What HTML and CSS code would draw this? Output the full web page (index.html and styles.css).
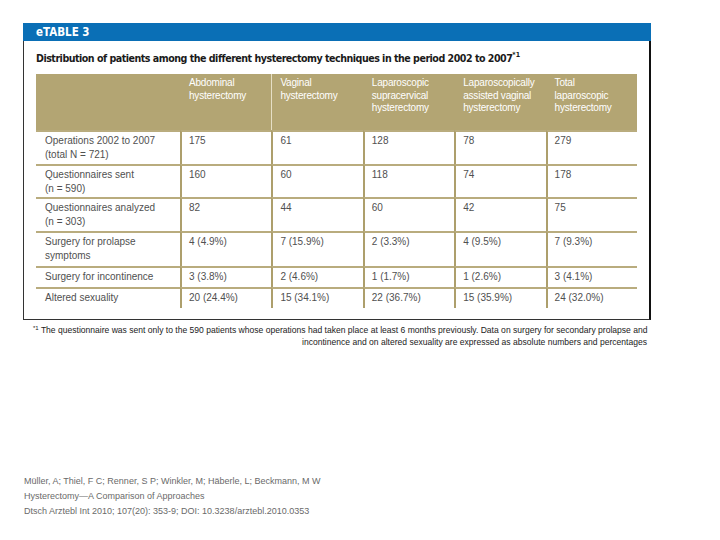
FILE: index.html
```html
<!DOCTYPE html>
<html lang="en">
<head>
<meta charset="utf-8">
<title>eTABLE 3</title>
<link rel="stylesheet" href="styles.css">
</head>
<body>
<div class="card">
  <div class="bar">eTABLE 3</div>
  <div class="frame">
    <div class="title">Distribution of patients among the different hysterectomy techniques in the period 2002 to 2007<sup>*1</sup></div>
    <div class="tbl">
      <div class="th"></div>
      <div class="th">Abdominal<br>hysterectomy</div>
      <div class="th sep">Vaginal<br>hysterectomy</div>
      <div class="th">Laparoscopic<br>supracervical<br>hysterectomy</div>
      <div class="th">Laparoscopically<br>assisted vaginal<br>hysterectomy</div>
      <div class="th">Total<br>laparoscopic<br>hysterectomy</div>

      <div class="td lbl">Operations 2002 to 2007<br>(total N = 721)</div>
      <div class="td">175</div>
      <div class="td">61</div>
      <div class="td">128</div>
      <div class="td">78</div>
      <div class="td">279</div>

      <div class="td lbl">Questionnaires sent<br>(n = 590)</div>
      <div class="td">160</div>
      <div class="td">60</div>
      <div class="td">118</div>
      <div class="td">74</div>
      <div class="td">178</div>

      <div class="td lbl">Questionnaires analyzed<br>(n = 303)</div>
      <div class="td">82</div>
      <div class="td">44</div>
      <div class="td">60</div>
      <div class="td">42</div>
      <div class="td">75</div>

      <div class="td lbl">Surgery for prolapse<br>symptoms</div>
      <div class="td">4 (4.9%)</div>
      <div class="td">7 (15.9%)</div>
      <div class="td">2 (3.3%)</div>
      <div class="td">4 (9.5%)</div>
      <div class="td">7 (9.3%)</div>

      <div class="td lbl">Surgery for incontinence</div>
      <div class="td">3 (3.8%)</div>
      <div class="td">2 (4.6%)</div>
      <div class="td">1 (1.7%)</div>
      <div class="td">1 (2.6%)</div>
      <div class="td">3 (4.1%)</div>

      <div class="td lbl">Altered sexuality</div>
      <div class="td">20 (24.4%)</div>
      <div class="td">15 (34.1%)</div>
      <div class="td">22 (36.7%)</div>
      <div class="td">15 (35.9%)</div>
      <div class="td">24 (32.0%)</div>
    </div>
  </div>
  <p class="note"><sup>*1</sup> The questionnaire was sent only to the 590 patients whose operations had taken place at least 6 months previously. Data on surgery for secondary prolapse and<br>incontinence and on altered sexuality are expressed as absolute numbers and percentages</p>
</div>
<div class="cite">
  <div>Müller, A; Thiel, F C; Renner, S P; Winkler, M; Häberle, L; Beckmann, M W</div>
  <div>Hysterectomy—A Comparison of Approaches</div>
  <div>Dtsch Arztebl Int 2010; 107(20): 353-9; DOI: 10.3238/arztebl.2010.0353</div>
</div>
</body>
</html>
```
FILE: styles.css
```css
* { box-sizing: border-box; }
html, body { margin: 0; padding: 0; background: #fff; }
body { font-family: "Liberation Sans", Arial, sans-serif; }

.card {
  margin: 23px 0 0 23px;
  width: 628px;
}

.bar {
  height: 18px;
  background: #0a6fb6;
  color: #fff;
  font-family: "DejaVu Sans Condensed", "Liberation Sans", Arial, sans-serif;
  font-weight: bold;
  font-size: 11.5px;
  line-height: 19px;
  padding-left: 13px;
}

.frame {
  border-left: 1px solid #333;
  border-right: 2px solid #111;
  border-bottom: 1px solid #333;
  padding: 10px 12px 11px 12px;
}

.title {
  font-family: "DejaVu Sans Condensed", "Liberation Sans", Arial, sans-serif;
  font-weight: bold;
  font-size: 10.6px;
  letter-spacing: -0.5px;
  line-height: 14px;
  color: #1a1a1a;
  margin-bottom: 9px;
  white-space: nowrap;
}
.title sup { font-size: 7px; line-height: 0; vertical-align: 5px; letter-spacing: 0; }

.tbl {
  display: grid;
  grid-template-columns: 144px repeat(5, 1fr);
  grid-template-rows: 56px 34px 33px 34px 35px 21px 21px;
  width: 601px;
}

.th {
  background: #b3a573;
  color: #fff;
  font-size: 10px;
  line-height: 12.5px;
  letter-spacing: -0.2px;
  padding: 3px 0 0 9px;
}
.th.sep { border-left: 1px solid #e6dfc6; padding-left: 8px; }

.td {
  border-top: 2px solid #b9ac7e;
  border-left: 2px solid #ad9f6c;
  color: #505050;
  font-size: 10px;
  line-height: 14px;
  padding: 2px 0 0 7px;
  white-space: nowrap;
}
.td.lbl { border-left: 0; padding-left: 9px; }

.note {
  margin: 4px 4px 0 10px;
  font-size: 8.55px;
  line-height: 12px;
  color: #222;
  text-align: right;
  white-space: nowrap;
}
.note sup { font-size: 6px; line-height: 0; vertical-align: 3px; }

.cite {
  margin: 126px 0 0 24px;
  font-size: 9px;
  line-height: 15px;
  color: #6a6a6a;
}
```
